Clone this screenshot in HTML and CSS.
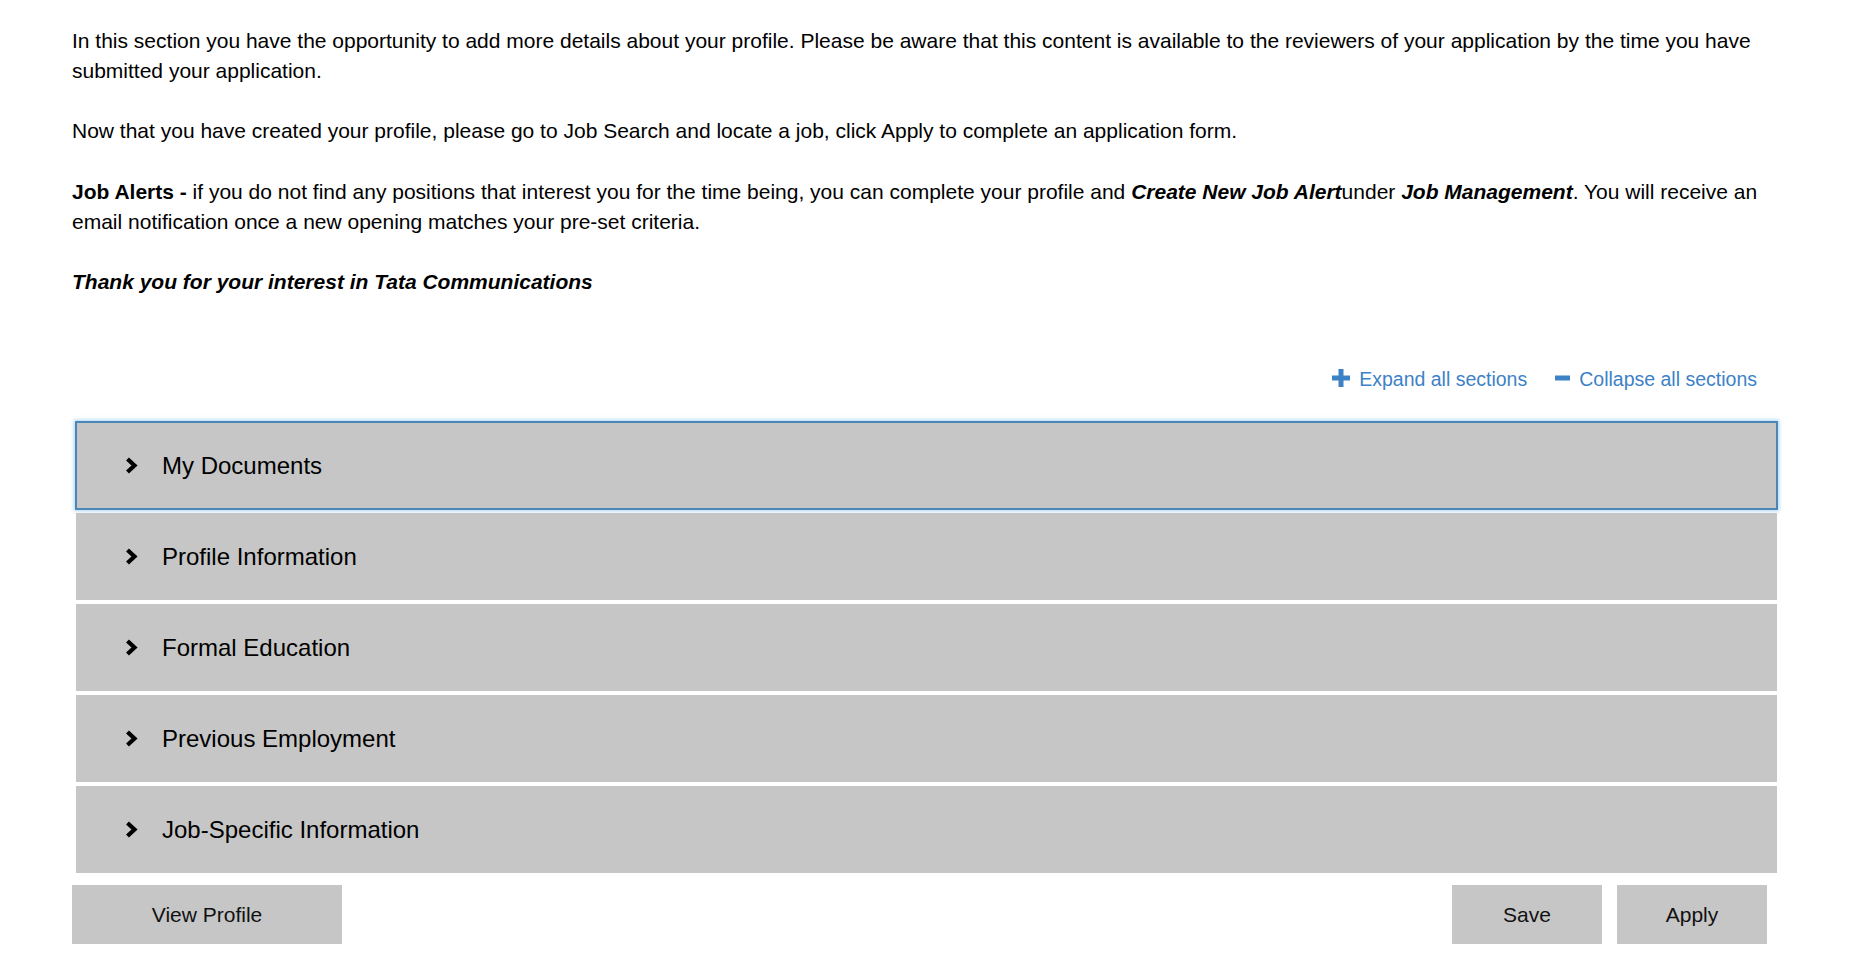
FILE: index.html
```html
<!DOCTYPE html>
<html lang="en">
<head>
    <meta charset="UTF-8">
    <meta name="viewport" content="width=device-width, initial-scale=1.0">
    <title>My Profile</title>
    <link rel="stylesheet" href="styles.css">
</head>
<body>
    <div class="wrap">
        <!-- Intro text -->
        <div class="intro">
            <p>In this section you have the opportunity to add more details about your profile. Please be aware that this content is available to the reviewers of your application by the time you have submitted your application.</p>
            <p>Now that you have created your profile, please go to Job Search and locate a job, click Apply to complete an application form.</p>
            <p><b>Job Alerts - </b>if you do not find any positions that interest you for the time being, you can complete your profile and <b><i>Create New Job Alert</i></b>under <b><i>Job Management</i></b>. You will receive an email notification once a new opening matches your pre-set criteria.</p>
            <p><b><i>Thank you for your interest in Tata Communications</i></b></p>
        </div>

        <!-- Expand / collapse -->
        <div class="section-tools">
            <a class="tool-link" href="#">
                <svg class="tool-icon" width="18" height="18" viewBox="0 0 18 18"><path d="M6.5 0h5v6.5H18v5h-6.5V18h-5v-6.5H0v-5h6.5z" fill="#3d82c7"/></svg>
                Expand all sections
            </a>
            <a class="tool-link" href="#">
                <svg class="tool-icon" width="15" height="18" viewBox="0 0 15 18"><rect x="0" y="6.5" width="15" height="5" fill="#3d82c7"/></svg>
                Collapse all sections
            </a>
        </div>

        <!-- Sections -->
        <div class="accordion">
            <div class="acc-item focused">
                <svg class="chevron" width="13" height="17" viewBox="0 0 13 17"><path d="M2.5 2l7 6.5-7 6.5" fill="none" stroke="#000" stroke-width="4.2"/></svg>
                <span>My Documents</span>
            </div>
            <div class="acc-item">
                <svg class="chevron" width="13" height="17" viewBox="0 0 13 17"><path d="M2.5 2l7 6.5-7 6.5" fill="none" stroke="#000" stroke-width="4.2"/></svg>
                <span>Profile Information</span>
            </div>
            <div class="acc-item">
                <svg class="chevron" width="13" height="17" viewBox="0 0 13 17"><path d="M2.5 2l7 6.5-7 6.5" fill="none" stroke="#000" stroke-width="4.2"/></svg>
                <span>Formal Education</span>
            </div>
            <div class="acc-item">
                <svg class="chevron" width="13" height="17" viewBox="0 0 13 17"><path d="M2.5 2l7 6.5-7 6.5" fill="none" stroke="#000" stroke-width="4.2"/></svg>
                <span>Previous Employment</span>
            </div>
            <div class="acc-item">
                <svg class="chevron" width="13" height="17" viewBox="0 0 13 17"><path d="M2.5 2l7 6.5-7 6.5" fill="none" stroke="#000" stroke-width="4.2"/></svg>
                <span>Job-Specific Information</span>
            </div>
        </div>

        <!-- Actions -->
        <div class="actions">
            <button class="btn btn-wide">View Profile</button>
            <div class="actions-right">
                <button class="btn">Save</button>
                <button class="btn">Apply</button>
            </div>
        </div>
    </div>
</body>
</html>
```

FILE: styles.css
```css
/* Basic Reset */
* {
    margin: 0;
    padding: 0;
    box-sizing: border-box;
}

body {
    font-family: "Liberation Sans", Arial, sans-serif;
    color: #000;
    background: #fff;
}

.wrap {
    width: 1710px;
    margin-left: 72px;
    padding-top: 26px;
}

/* Intro */
.intro p {
    font-size: 21px;
    line-height: 30.2px;
    margin-bottom: 30px;
}

.intro p:last-child {
    margin-bottom: 0;
}

/* Expand / collapse links */
.section-tools {
    display: flex;
    justify-content: flex-end;
    gap: 28px;
    padding-right: 25px;
    margin-top: 67px;
    height: 30px;
    align-items: center;
}

.tool-link {
    display: flex;
    align-items: center;
    gap: 9px;
    color: #3d82c7;
    text-decoration: none;
    font-size: 19.5px;
}

.tool-icon {
    position: relative;
    top: -1px;
}

/* Accordion */
.accordion {
    margin: 28px 5px 0 4px;
    display: flex;
    flex-direction: column;
    gap: 4px;
}

.acc-item {
    height: 87px;
    background: #c6c6c6;
    display: flex;
    align-items: center;
    padding-left: 49px;
    font-size: 24px;
    cursor: pointer;
}

.acc-item.focused {
    box-shadow: inset 0 0 0 1px #4b87b6, 0 0 0 1px #4b87b6, 0 0 4px 2px rgba(102, 175, 233, 0.55);
}

.chevron {
    margin-right: 24px;
}

/* Buttons */
.actions {
    display: flex;
    justify-content: space-between;
    margin-top: 12px;
    padding-right: 15px;
}

.actions-right {
    display: flex;
    gap: 15px;
}

.btn {
    width: 150px;
    height: 59px;
    border: none;
    background: #c6c6c6;
    color: #111;
    font-family: "Liberation Sans", Arial, sans-serif;
    font-size: 21px;
    cursor: pointer;
}

.btn-wide {
    width: 270px;
}
```
